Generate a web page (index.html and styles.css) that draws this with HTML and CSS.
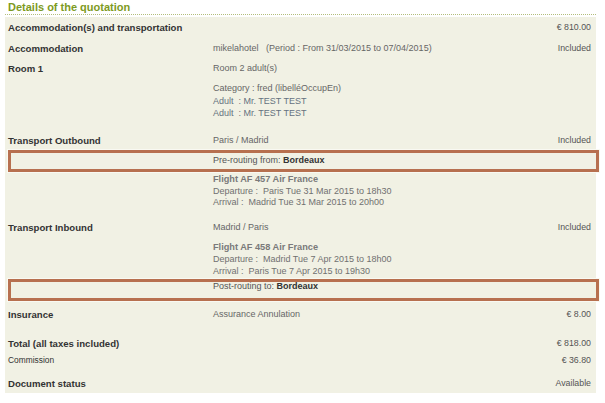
FILE: index.html
```html
<!DOCTYPE html>
<html lang="en">
<head>
<meta charset="utf-8">
<title>Details of the quotation</title>
<link rel="stylesheet" href="styles.css">
</head>
<body>
<div class="quote">
  <h2 class="title">Details of the quotation</h2>
  <div class="panel">
    <div class="row r-sec">
      <div class="lab">Accommodation(s) and transportation</div>
      <div class="val"></div>
      <div class="amt">€ 810.00</div>
    </div>
    <div class="row r-acc">
      <div class="lab">Accommodation</div>
      <div class="val">mikelahotel&nbsp;&nbsp; (Period : From 31/03/2015 to 07/04/2015)</div>
      <div class="amt">Included</div>
    </div>
    <div class="row r-room">
      <div class="lab">Room 1</div>
      <div class="val">
        <div class="first">Room 2 adult(s)</div>
        <div class="line cat">Category : fred (libelléOccupEn)</div>
        <div class="adults">
          <div class="line adult">Adult&nbsp; : Mr. TEST TEST</div>
          <div class="line adult">Adult&nbsp; : Mr. TEST TEST</div>
        </div>
      </div>
      <div class="amt"></div>
    </div>
    <div class="row r-out">
      <div class="lab">Transport Outbound</div>
      <div class="val">Paris / Madrid</div>
      <div class="amt">Included</div>
    </div>
    <div class="route route-pre">
      <div class="lab"></div>
      <div class="val">Pre-routing from: <b>Bordeaux</b></div>
    </div>
    <div class="row r-fl1">
      <div class="lab"></div>
      <div class="val flight">
        <div class="line fl">Flight AF 457 Air France</div>
        <div class="line">Departure :&nbsp; Paris Tue 31 Mar 2015 to 18h30</div>
        <div class="line">Arrival :&nbsp; Madrid Tue 31 Mar 2015 to 20h00</div>
      </div>
      <div class="amt"></div>
    </div>
    <div class="row r-in">
      <div class="lab">Transport Inbound</div>
      <div class="val">Madrid / Paris</div>
      <div class="amt">Included</div>
    </div>
    <div class="row r-fl2">
      <div class="lab"></div>
      <div class="val flight flight2">
        <div class="line fl">Flight AF 458 Air France</div>
        <div class="line">Departure :&nbsp; Madrid Tue 7 Apr 2015 to 18h00</div>
        <div class="line">Arrival :&nbsp; Paris Tue 7 Apr 2015 to 19h30</div>
      </div>
      <div class="amt"></div>
    </div>
    <div class="route route-post">
      <div class="lab"></div>
      <div class="val">Post-routing to: <b>Bordeaux</b></div>
    </div>
    <div class="row r-ins">
      <div class="lab">Insurance</div>
      <div class="val">Assurance Annulation</div>
      <div class="amt">€ 8.00</div>
    </div>
    <div class="row r-tot">
      <div class="lab">Total (all taxes included)</div>
      <div class="val"></div>
      <div class="amt">€ 818.00</div>
    </div>
    <div class="row r-com">
      <div class="lab small">Commission</div>
      <div class="val"></div>
      <div class="amt">€ 36.80</div>
    </div>
    <div class="row r-doc">
      <div class="lab">Document status</div>
      <div class="val"></div>
      <div class="amt">Available</div>
    </div>
  </div>
</div>
</body>
</html>
```
FILE: styles.css
```css
html, body {
  margin: 0;
  padding: 0;
  background: #ffffff;
}

body {
  font-family: "Liberation Sans", Arial, sans-serif;
  color: #333333;
}

.quote {
  width: 591px;
  margin: 0 0 0 5px;
}

.title {
  margin: 0;
  padding: 1px 3px 0;
  height: 13px;
  line-height: 13px;
  font-size: 11px;
  font-weight: bold;
  color: #7d9a23;
  border-bottom: 1px dotted #b3bd7c;
}

.panel {
  margin-top: 2px;
  background: #f1f1e4;
  padding: 0 0 3.7px;
  display: flex;
  flex-direction: column;
}

.row {
  display: grid;
  grid-template-columns: 205px 1fr auto;
  padding: 0 5px 0 3px;
  line-height: 13px;
}

.lab {
  font-size: 9.6px;
  font-weight: bold;
  color: #333333;
}

.lab.small {
  font-size: 8.4px;
  font-weight: normal;
}

.val {
  font-size: 9px;
  color: #666666;
}

.amt {
  font-size: 8.8px;
  color: #555555;
  text-align: right;
}

.line {
  line-height: 11.5px;
}

.cat {
  margin-top: 7.5px;
}

.adults {
  margin-top: 2.25px;
}

.adult {
  color: #65717f;
}

.flight .fl {
  font-size: 9.2px;
  font-weight: bold;
  color: #7a7a7a;
}

.flight {
  color: #707070;
}

.flight2 .line {
  line-height: 12px;
}

.r-sec { margin-top: 4px; }
.r-acc { margin-top: 8px; }
.r-room { margin-top: 7px; }
.r-out { margin-top: 14.25px; }
.r-fl1 { margin-top: 2.75px; }
.r-in { margin-top: 12.45px; }
.r-fl2 { margin-top: 6.8px; }
.r-ins { margin-top: 7px; }
.r-tot { margin-top: 15.3px; }
.r-com { margin-top: 4.7px; }
.r-doc { margin-top: 9.3px; }

.route {
  display: grid;
  grid-template-columns: 202px 1fr;
  margin: 3px -3px 0 3px;
  border: 3px solid #b7704f;
  box-shadow: 0 0 0 1px #f9f9f2;
  height: 16px;
  box-sizing: content-box;
}

.route .val {
  color: #555555;
}

.route b {
  color: #333333;
  font-weight: bold;
}

.route-pre .val {
  line-height: 13px;
  padding-top: 1px;
}

.route-post {
  margin-top: 2.5px;
}

.route-post .val {
  line-height: 9px;
}
```
